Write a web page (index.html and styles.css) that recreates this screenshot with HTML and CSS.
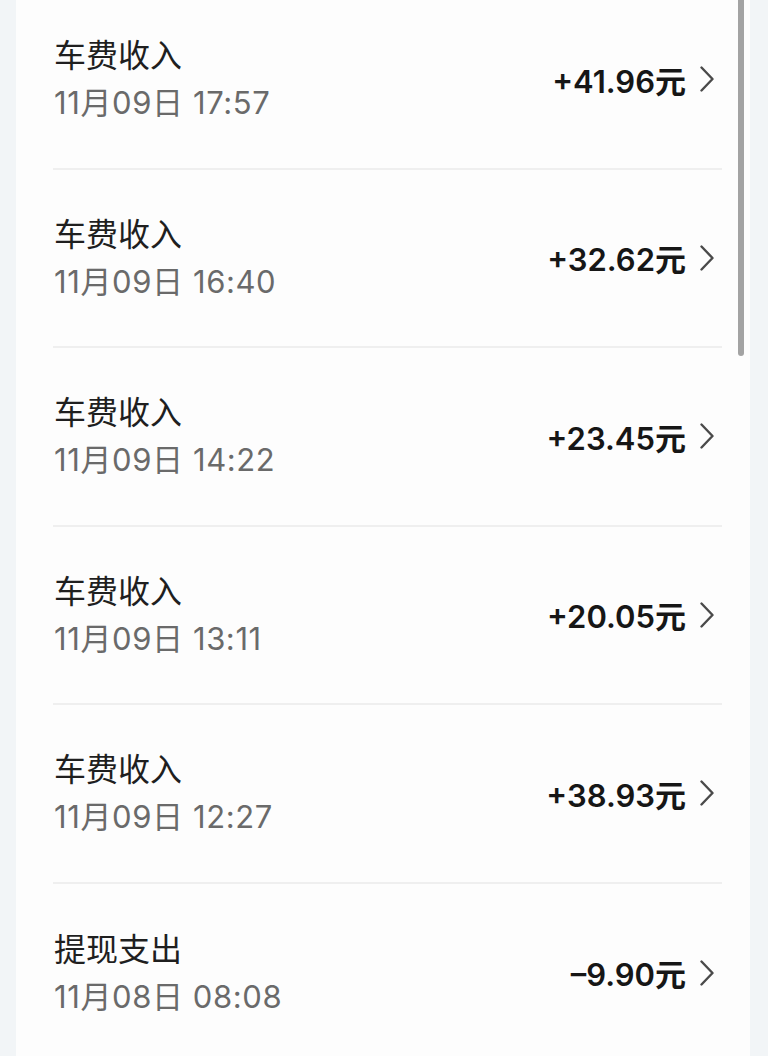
FILE: index.html
```html
<!DOCTYPE html>
<html lang="zh-CN">
<head>
    <meta charset="UTF-8">
    <meta name="viewport" content="width=device-width, initial-scale=1.0">
    <title>收支明细</title>
    <link rel="stylesheet" href="styles.css">
</head>
<body>
    <main class="card">
        <ul class="list">
            <li class="row">
                <div class="info">
                    <p class="title">车费收入</p>
                    <p class="date">11月09日 17:57</p>
                </div>
                <div class="amount">+41.96元<svg class="chevron" viewBox="0 0 14 26"><path d="M1.5 1.5 L12.5 13 L1.5 24.5"/></svg></div>
            </li>
            <li class="row">
                <div class="info">
                    <p class="title">车费收入</p>
                    <p class="date">11月09日 16:40</p>
                </div>
                <div class="amount">+32.62元<svg class="chevron" viewBox="0 0 14 26"><path d="M1.5 1.5 L12.5 13 L1.5 24.5"/></svg></div>
            </li>
            <li class="row">
                <div class="info">
                    <p class="title">车费收入</p>
                    <p class="date">11月09日 14:22</p>
                </div>
                <div class="amount">+23.45元<svg class="chevron" viewBox="0 0 14 26"><path d="M1.5 1.5 L12.5 13 L1.5 24.5"/></svg></div>
            </li>
            <li class="row">
                <div class="info">
                    <p class="title">车费收入</p>
                    <p class="date">11月09日 13:11</p>
                </div>
                <div class="amount">+20.05元<svg class="chevron" viewBox="0 0 14 26"><path d="M1.5 1.5 L12.5 13 L1.5 24.5"/></svg></div>
            </li>
            <li class="row">
                <div class="info">
                    <p class="title">车费收入</p>
                    <p class="date">11月09日 12:27</p>
                </div>
                <div class="amount">+38.93元<svg class="chevron" viewBox="0 0 14 26"><path d="M1.5 1.5 L12.5 13 L1.5 24.5"/></svg></div>
            </li>
            <li class="row">
                <div class="info">
                    <p class="title">提现支出</p>
                    <p class="date">11月08日 08:08</p>
                </div>
                <div class="amount">–9.90元<svg class="chevron" viewBox="0 0 14 26"><path d="M1.5 1.5 L12.5 13 L1.5 24.5"/></svg></div>
            </li>
        </ul>
        <div class="scrollbar"></div>
    </main>
</body>
</html>
```

FILE: styles.css
```css
html, body {
    height: 100%;
}
body {
    font-family: "Inter", "Noto Sans CJK SC", sans-serif;
    margin: 0;
    padding: 0;
    background-color: #f2f5f7;
    color: #1b1b1b;
    overflow: hidden;
}
.card {
    position: relative;
    margin: 0 18px 0 16px;
    min-height: 100%;
    background: #fdfdfd;
}
.list {
    list-style: none;
    margin: -9px 0 0 0;
    padding: 0;
}
.row {
    display: flex;
    align-items: center;
    justify-content: space-between;
    box-sizing: border-box;
    height: 178.5px;
    margin: 0 28px 0 37px;
    padding: 0 8px 0 1px;
    border-bottom: 2px solid #efefef;
}
.row:last-child {
    border-bottom: none;
}
.title, .date {
    margin: 0;
    line-height: 47px;
}
.title {
    font-size: 32px;
    color: #1f1f1f;
}
.date {
    font-size: 31px;
    letter-spacing: 0.6px;
    color: #6a6a6a;
}
.amount {
    display: flex;
    align-items: center;
    font-size: 31px;
    font-weight: 600;
    color: #161616;
}
.chevron {
    width: 14px;
    height: 26px;
    margin-left: 14px;
    fill: none;
    stroke: #4a4a4a;
    stroke-width: 2.4;
    stroke-linecap: round;
    stroke-linejoin: round;
}
.scrollbar {
    position: absolute;
    top: 0;
    right: 6px;
    width: 6px;
    height: 365px;
    border-radius: 0 0 3px 3px;
    background: #a3a3a3;
}
```
